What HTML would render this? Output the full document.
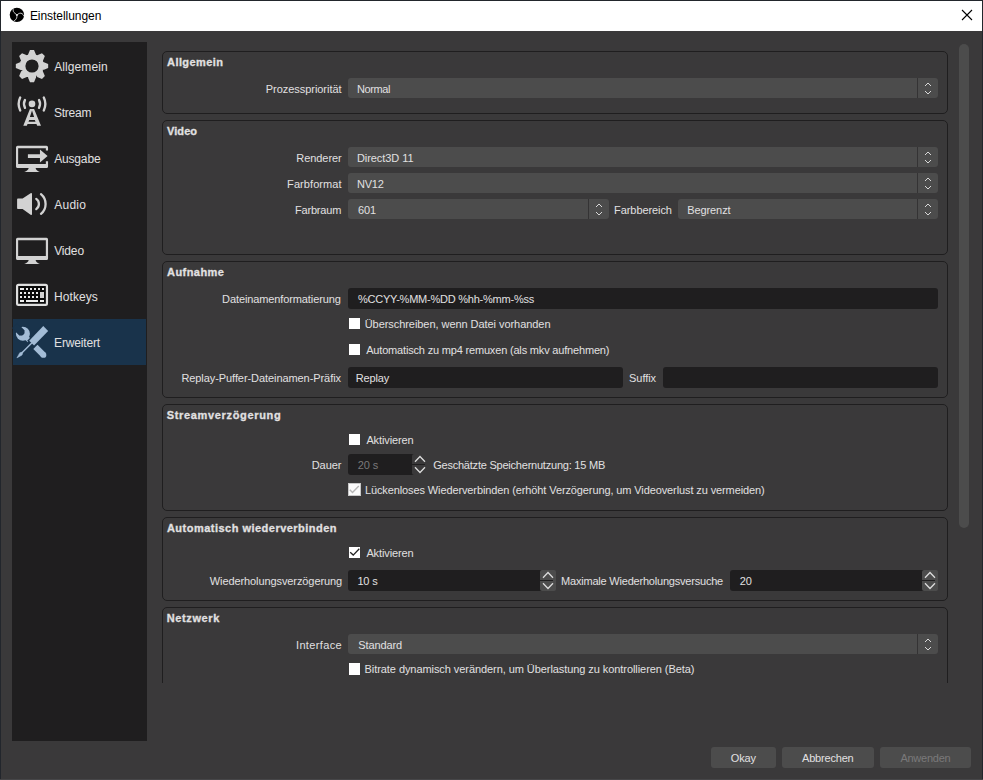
<!DOCTYPE html>
<html lang="de"><head><meta charset="utf-8"><title>Einstellungen</title>
<style>
html,body{margin:0;padding:0}
body{width:983px;height:780px;overflow:hidden;background:#22262c;position:relative;font-family:"Liberation Sans",sans-serif}
div,span,svg{position:absolute;box-sizing:border-box}
.t{white-space:pre;line-height:14px;height:14px}
.gb{border:1px solid #1f1e1f;border-radius:5px;left:162px;width:786px}
.cb{background:#4c4c4c;border-radius:3px;height:20px}
.dd{width:21px;height:20px;top:0;right:0;border-left:1px solid #343334}
.le{background:#1f1e1f;border-radius:3px}
.ck{width:11.6px;height:11.6px;background:#fff}
.btn{background:#4c4c4c;border-radius:3px;top:747px;height:21px}
.sb{background:#4c4c4c;border-radius:2px;width:16px}
</style></head><body>

<div style="left:1px;top:1px;width:981px;height:30px;background:#fff"></div>
<div style="left:1px;top:31px;width:981px;height:748px;background:#3a393a"></div>
<div style="left:0;top:779px;width:983px;height:1px;background:#464648"></div>
<svg style="left:9px;top:7px" width="16" height="16" viewBox="0 0 16 16"><circle cx="7.9" cy="7.85" r="7.2" fill="#000"/>
<g fill="none" stroke="#e4e4e4" stroke-width="0.9" stroke-linecap="round"><path d="M7.9 7.9 C6.5 6.8 4.9 5.6 4.4 4.5 C4.2 3.9 4.2 3.3 4.26 2.7"/><path d="M7.9 7.9 C8.8 7.2 9.6 6.6 10.6 6.3 C12.4 5.8 14.0 6.8 14.6 8.5"/><path d="M7.9 7.9 C8.0 9 7.9 10 7.7 10.8 C7.3 12.2 6.3 13.2 5.2 13.7"/></g><circle cx="7.9" cy="7.9" r="1" fill="#ddd"/></svg>
<svg style="left:961px;top:9px" width="12" height="12" viewBox="0 0 12 12"><path d="M1 1 L11 11 M11 1 L1 11" stroke="#000" stroke-width="1.1" fill="none"/></svg>
<div style="left:12px;top:42px;width:135px;height:699px;background:#1f1e1f"></div>
<div style="left:13px;top:319px;width:133px;height:46px;background:#19334b"></div>
<div style="left:959px;top:44px;width:10px;height:484px;border-radius:5px;background:#4c4c4c"></div>
<div class="gb" style="top:51px;height:63px"></div>
<div class="gb" style="top:120px;height:135px"></div>
<div class="gb" style="top:261px;height:137px"></div>
<div class="gb" style="top:404px;height:107px"></div>
<div class="gb" style="top:517px;height:84px"></div>
<div style="left:162px;top:607px;width:786px;height:76px;overflow:hidden"><div class="gb" style="left:0;top:0;height:120px"></div></div>
<div class="cb" style="left:348px;top:78px;width:590px"><div class="dd"></div></div>
<svg style="left:920px;top:79px" width="16" height="19" viewBox="0 0 16 19"><g fill="none" stroke="#d8d8d8" stroke-width="1"><path d="M5.0 7 L8 4 L11.0 7"/><path d="M5.0 12 L8 15 L11.0 12"/></g></svg>
<div class="cb" style="left:348px;top:147px;width:590px"><div class="dd"></div></div>
<svg style="left:920px;top:148px" width="16" height="19" viewBox="0 0 16 19"><g fill="none" stroke="#d8d8d8" stroke-width="1"><path d="M5.0 7 L8 4 L11.0 7"/><path d="M5.0 12 L8 15 L11.0 12"/></g></svg>
<div class="cb" style="left:348px;top:173px;width:590px"><div class="dd"></div></div>
<svg style="left:920px;top:174px" width="16" height="19" viewBox="0 0 16 19"><g fill="none" stroke="#d8d8d8" stroke-width="1"><path d="M5.0 7 L8 4 L11.0 7"/><path d="M5.0 12 L8 15 L11.0 12"/></g></svg>
<div class="cb" style="left:348px;top:199px;width:261px"><div class="dd"></div></div>
<svg style="left:591px;top:200px" width="16" height="19" viewBox="0 0 16 19"><g fill="none" stroke="#d8d8d8" stroke-width="1"><path d="M5.0 7 L8 4 L11.0 7"/><path d="M5.0 12 L8 15 L11.0 12"/></g></svg>
<div class="cb" style="left:678px;top:199px;width:260px"><div class="dd"></div></div>
<svg style="left:920px;top:200px" width="16" height="19" viewBox="0 0 16 19"><g fill="none" stroke="#d8d8d8" stroke-width="1"><path d="M5.0 7 L8 4 L11.0 7"/><path d="M5.0 12 L8 15 L11.0 12"/></g></svg>
<div class="cb" style="left:348px;top:634px;width:590px"><div class="dd"></div></div>
<svg style="left:920px;top:635px" width="16" height="19" viewBox="0 0 16 19"><g fill="none" stroke="#d8d8d8" stroke-width="1"><path d="M5.0 7 L8 4 L11.0 7"/><path d="M5.0 12 L8 15 L11.0 12"/></g></svg>
<div class="le" style="left:348px;top:288px;width:590px;height:21px"></div>
<div class="le" style="left:348px;top:367px;width:275px;height:21px"></div>
<div class="le" style="left:663px;top:367px;width:275px;height:21px"></div>
<div class="le" style="left:348px;top:454px;width:66px;height:21px;border-radius:3px 0 0 3px"></div>
<div class="sb" style="left:412px;top:454px;height:21px;background:#3a393a"></div>
<div style="left:412px;top:464px;width:13px;height:1px;background:#1f1e1f"></div>
<svg style="left:412px;top:454px" width="16" height="21" viewBox="0 0 16 21"><g fill="none" stroke="#dcdcdc" stroke-width="1.3"><path d="M3 7.7 L8 2.5 L13 7.7"/><path d="M3 13.3 L8 18.5 L13 13.3"/></g></svg>
<div class="le" style="left:348px;top:570px;width:194px;height:21px;border-radius:3px 0 0 3px"></div>
<div class="sb" style="left:540px;top:570px;height:21px;background:#4c4c4c"></div>
<div style="left:540px;top:580px;width:13px;height:1px;background:#1f1e1f"></div>
<svg style="left:540px;top:570px" width="16" height="21" viewBox="0 0 16 21"><g fill="none" stroke="#dcdcdc" stroke-width="1.3"><path d="M3 7.7 L8 2.5 L13 7.7"/><path d="M3 13.3 L8 18.5 L13 13.3"/></g></svg>
<div class="le" style="left:730px;top:570px;width:194px;height:21px;border-radius:3px 0 0 3px"></div>
<div class="sb" style="left:922px;top:570px;height:21px;background:#4c4c4c"></div>
<div style="left:922px;top:580px;width:13px;height:1px;background:#1f1e1f"></div>
<svg style="left:922px;top:570px" width="16" height="21" viewBox="0 0 16 21"><g fill="none" stroke="#dcdcdc" stroke-width="1.3"><path d="M3 7.7 L8 2.5 L13 7.7"/><path d="M3 13.3 L8 18.5 L13 13.3"/></g></svg>
<div class="ck" style="left:348.7px;top:317.6px"></div>
<div class="ck" style="left:348.7px;top:343.7px"></div>
<div class="ck" style="left:348.7px;top:433.6px"></div>
<div class="ck" style="left:348.7px;top:663.1px"></div>
<div class="ck" style="left:348.6px;top:546.5px"></div>
<svg style="left:348px;top:546px" width="13" height="13" viewBox="0 0 13 13"><path d="M2.2 6.3 L5.2 9.1 L11.3 2.7" fill="none" stroke="#222" stroke-width="1.3"/></svg>
<div style="left:348px;top:483px;width:13px;height:13px;background:#fbfbfb;border:1px solid #c8c8c8"></div>
<svg style="left:348px;top:483px" width="13" height="13" viewBox="0 0 13 13"><path d="M1.8 6.7 L4.5 9.4 L10.8 3" fill="none" stroke="#b6b6b6" stroke-width="1.4"/></svg>
<div class="btn" style="left:711px;width:65px"></div>
<div class="btn" style="left:782px;width:92px"></div>
<div class="btn" style="left:880px;width:91px"></div>
<svg style="left:0;top:0" width="150" height="370" viewBox="0 0 150 370">
<g fill="#d2d2d2">
<!-- gear -->
<path transform="translate(15.88 49.88) scale(4.03)" d="M3.5 0l-.5 1.190c-.1.030-.19.080-.28.130l-1.190-.5-.72.720.5 1.190c-.5.100-.1.180-.13.280l-1.190.5v1l1.190.5c.4.100.8.180.13.280l-.5 1.190.72.720 1.190-.5c.9.040.18.090.28.130l.5 1.190h1l.5-1.190c.09-.4.190-.8.280-.130l1.190.5.720-.720-.5-1.190c.040-.9.090-.190.130-.280l1.190-.5v-1l-1.190-.5c-.030-.09-.080-.190-.130-.280l.5-1.190-.720-.720-1.190.5c-.09-.040-.190-.090-.280-.130l-.5-1.190h-1zm.5 2.500c.830 0 1.500.670 1.500 1.500s-.670 1.500-1.500 1.500-1.500-.670-1.500-1.500.670-1.500 1.500-1.500z"/>
<circle cx="32" cy="66" r="6.6" fill="#1f1e1f"/>
<!-- stream -->
<circle cx="32" cy="103.9" r="3.3"/>
<path fill-rule="evenodd" d="M29.9 109 L34.1 109 L41 125.8 L37.2 125.8 L36.45 124 L27.55 124 L26.8 125.8 L23.3 125.8 Z M32 110.6 L29.9 117.1 L34.1 117.1 Z M29.2 120 L34.8 120 L35.5 121.7 L28.5 121.7 Z"/>
<!-- output stand + video stand -->
<path d="M28.7 168 L35.6 168 Q36 170.6 39.9 171.9 L24.2 171.9 Q28.2 170.6 28.7 168 Z"/>
<path d="M28.7 260 L35.6 260 Q36 262.6 39.9 263.9 L24.2 263.9 Q28.2 262.6 28.7 260 Z"/>
<!-- output monitor with gap -->
<path fill-rule="evenodd" d="M17.6 145.8 H46.4 A1.6 1.6 0 0 1 48.05 147.4 V150.6 H45.85 V148.15 H18.15 V163.9 H45.85 V161.3 H48.05 V166.4 A1.6 1.6 0 0 1 46.4 168 H17.6 A1.6 1.6 0 0 1 16 166.4 V147.4 A1.6 1.6 0 0 1 17.6 145.8 Z"/>
<path d="M27.9 154.15 H39.95 V149.5 L47.6 156.05 L39.95 162.6 V158 H27.9 Z"/>
<!-- video monitor -->
<path fill-rule="evenodd" d="M17.6 237.8 H46.4 A1.6 1.6 0 0 1 48.05 239.4 V258.4 A1.6 1.6 0 0 1 46.4 260 H17.6 A1.6 1.6 0 0 1 16 258.4 V239.4 A1.6 1.6 0 0 1 17.6 237.8 Z M18.15 240.15 V255.9 H45.85 V240.15 Z"/>
<!-- audio -->
<path d="M17.9 198.6 H22.6 L30.6 193.2 Q32 192.6 32 194 V214 Q32 215.4 30.6 214.8 L22.6 209.1 H17.9 Q17.1 209.1 17.1 208.3 V199.4 Q17.1 198.6 17.9 198.6 Z"/>
</g>
<g fill="none" stroke="#d2d2d2" stroke-linecap="round">
<path stroke-width="2.3" d="M25.0 99.9 A8.6 8.6 0 0 0 25.0 107.9"/>
<path stroke-width="2.3" d="M39.0 99.9 A8.6 8.6 0 0 1 39.0 107.9"/>
<path stroke-width="2.4" d="M20.2 97.6 A14.7 14.7 0 0 0 20.2 110.4"/>
<path stroke-width="2.4" d="M43.8 97.6 A14.7 14.7 0 0 1 43.8 110.4"/>
</g>
<g fill="none" stroke="#d2d2d2" stroke-linecap="round">
<path stroke-width="2.3" d="M36.26 198.92 A6.2 6.2 0 0 1 36.26 209.08"/>
<path stroke-width="2.3" d="M40.99 194.12 A12.9 12.9 0 0 1 40.99 213.88"/>
</g>
<!-- keyboard -->
<rect x="17.1" y="284.9" width="29.85" height="20" rx="1.4" fill="#0b0b0b" stroke="#dedede" stroke-width="2.2"/>
<g fill="#ececec">
<rect x="20" y="288" width="4" height="2"/><rect x="26" y="288" width="2" height="2"/><rect x="30" y="288" width="2" height="2"/><rect x="34" y="288" width="2" height="2"/><rect x="38" y="288" width="2" height="2"/><rect x="42" y="288" width="2" height="2"/>
<rect x="20" y="292" width="2" height="2"/><rect x="24" y="292" width="2" height="2"/><rect x="28" y="292" width="2" height="2"/><rect x="32" y="292" width="2" height="2"/><rect x="36" y="292" width="2" height="2"/>
<rect x="20" y="296" width="2" height="2"/><rect x="24" y="296" width="2" height="2"/><rect x="28" y="296" width="2" height="2"/><rect x="32" y="296" width="2" height="2"/><rect x="36" y="296" width="2" height="2"/>
<rect x="40" y="292" width="4" height="6" fill="#d2d2d2"/>
<rect x="20" y="300" width="4" height="2"/><rect x="26" y="300" width="12" height="2"/><rect x="40" y="300" width="4" height="2"/>
</g>
<!-- advanced: wrench + screwdriver -->
<g>
<circle cx="22.9" cy="333.8" r="7" fill="#a3bcd6"/>
<path d="M24.2 335.2 L24.2 330.3 L17.13 323.2 L12.2 328.1 L19.3 335.2 Z" fill="#19334b" stroke="#19334b" stroke-width="0.6" stroke-linejoin="round"/>
<path d="M23.4 334.6 L29.4 340.6" stroke="#a3bcd6" stroke-width="4.8" fill="none"/>
<path d="M47.3 327.0 L30.6 344.15" stroke="#19334b" stroke-width="9.6" fill="none"/>
<path d="M31.6 343.15 L26 348.75" stroke="#19334b" stroke-width="4.1" fill="none"/>
<path d="M35.4 346.9 L43.4 354.9" stroke="#a3bcd6" stroke-width="5.9" fill="none"/>
<circle cx="43.4" cy="354.9" r="2.95" fill="#a3bcd6"/>
<path d="M43.3 326.1 L48.15 331 L34.05 345.6 L29.2 340.7 Z" fill="#a3bcd6"/>
<path d="M32 342.8 L21 353.8" stroke="#a3bcd6" stroke-width="1.5" fill="none"/>
<path d="M22.7 352.1 L19.8 352.7 L16.9 357.9 L22.1 355.0 Z" fill="#a3bcd6" stroke="#a3bcd6" stroke-width="0.5" stroke-linejoin="round"/>
</g>
</svg>

<span class="t" style="left:29.9px;top:9px;font-size:12px;color:#000000;letter-spacing:-0.05px">Einstellungen</span>
<span class="t" style="left:54.2px;top:60px;font-size:12px;color:#e1e0e1;letter-spacing:0.1px">Allgemein</span>
<span class="t" style="left:53.9px;top:106px;font-size:12px;color:#e1e0e1;letter-spacing:-0.2px">Stream</span>
<span class="t" style="left:54.2px;top:152px;font-size:12px;color:#e1e0e1;letter-spacing:-0.167px">Ausgabe</span>
<span class="t" style="left:54.2px;top:198px;font-size:12px;color:#e1e0e1;letter-spacing:0.275px">Audio</span>
<span class="t" style="left:54.2px;top:244px;font-size:12px;color:#e1e0e1;letter-spacing:-0.15px">Video</span>
<span class="t" style="left:54.1px;top:290px;font-size:12px;color:#e1e0e1;letter-spacing:0.051px">Hotkeys</span>
<span class="t" style="left:54.1px;top:336px;font-size:12px;color:#e1e0e1;letter-spacing:-0.164px">Erweitert</span>
<span class="t" style="left:167.1px;top:55px;font-size:11px;color:#e1e0e1;font-weight:700;-webkit-text-stroke:0.3px #e1e0e1;letter-spacing:0.4px">Allgemein</span>
<span class="t" style="left:167px;top:124px;font-size:11px;color:#e1e0e1;font-weight:700;-webkit-text-stroke:0.3px #e1e0e1;letter-spacing:0.075px">Video</span>
<span class="t" style="left:167px;top:265px;font-size:11px;color:#e1e0e1;font-weight:700;-webkit-text-stroke:0.3px #e1e0e1;letter-spacing:0.457px">Aufnahme</span>
<span class="t" style="left:166.8px;top:408px;font-size:11px;color:#e1e0e1;font-weight:700;-webkit-text-stroke:0.3px #e1e0e1;letter-spacing:0.656px">Streamverzögerung</span>
<span class="t" style="left:166.9px;top:521px;font-size:11px;color:#e1e0e1;font-weight:700;-webkit-text-stroke:0.3px #e1e0e1;letter-spacing:0.485px">Automatisch wiederverbinden</span>
<span class="t" style="left:166.7px;top:611px;font-size:11px;color:#e1e0e1;font-weight:700;-webkit-text-stroke:0.3px #e1e0e1;letter-spacing:0.628px">Netzwerk</span>
<span class="t" style="left:265.8px;top:82px;font-size:11px;color:#e1e0e1;letter-spacing:-0.046px">Prozesspriorität</span>
<span class="t" style="left:296.3px;top:151px;font-size:11px;color:#e1e0e1;letter-spacing:-0.056px">Renderer</span>
<span class="t" style="left:287.1px;top:177px;font-size:11px;color:#e1e0e1;letter-spacing:0.078px">Farbformat</span>
<span class="t" style="left:294.9px;top:203px;font-size:11px;color:#e1e0e1;letter-spacing:-0.171px">Farbraum</span>
<span class="t" style="left:614.1px;top:203px;font-size:11px;color:#e1e0e1;letter-spacing:-0.08px">Farbbereich</span>
<span class="t" style="left:222.1px;top:292px;font-size:11px;color:#e1e0e1;letter-spacing:-0.11px">Dateinamenformatierung</span>
<span class="t" style="left:181.4px;top:371px;font-size:11px;color:#e1e0e1;letter-spacing:-0.073px">Replay-Puffer-Dateinamen-Präfix</span>
<span class="t" style="left:629.1px;top:371px;font-size:11px;color:#e1e0e1;letter-spacing:-0.08px">Suffix</span>
<span class="t" style="left:311.7px;top:458px;font-size:11px;color:#e1e0e1;letter-spacing:-0.05px">Dauer</span>
<span class="t" style="left:433.2px;top:458px;font-size:11px;color:#e1e0e1;letter-spacing:-0.222px">Geschätzte Speichernutzung: 15 MB</span>
<span class="t" style="left:209.8px;top:574px;font-size:11px;color:#e1e0e1;letter-spacing:-0.095px">Wiederholungsverzögerung</span>
<span class="t" style="left:561.1px;top:574px;font-size:11px;color:#e1e0e1;letter-spacing:-0.207px">Maximale Wiederholungsversuche</span>
<span class="t" style="left:296.0px;top:638px;font-size:11px;color:#e1e0e1;letter-spacing:0.35px">Interface</span>
<span class="t" style="left:356.9px;top:82px;font-size:11px;color:#e1e0e1;letter-spacing:-0.36px">Normal</span>
<span class="t" style="left:356.9px;top:151px;font-size:11px;color:#e1e0e1;letter-spacing:-0.06px">Direct3D 11</span>
<span class="t" style="left:356.9px;top:177px;font-size:11px;color:#e1e0e1;letter-spacing:-0.15px">NV12</span>
<span class="t" style="left:358.1px;top:203px;font-size:11px;color:#e1e0e1;letter-spacing:-0.15px">601</span>
<span class="t" style="left:687.2px;top:203px;font-size:11px;color:#e1e0e1;letter-spacing:-0.087px">Begrenzt</span>
<span class="t" style="left:358.0px;top:292px;font-size:11px;color:#e1e0e1;letter-spacing:-0.229px">%CCYY-%MM-%DD %hh-%mm-%ss</span>
<span class="t" style="left:355.8px;top:371px;font-size:11px;color:#e1e0e1;letter-spacing:-0.16px">Replay</span>
<span class="t" style="left:357.8px;top:458px;font-size:11px;color:#7a797a;letter-spacing:-0.15px">20 s</span>
<span class="t" style="left:357.4px;top:574px;font-size:11px;color:#e1e0e1;letter-spacing:-0.15px">10 s</span>
<span class="t" style="left:739.8px;top:574px;font-size:11px;color:#e1e0e1;letter-spacing:-0.15px">20</span>
<span class="t" style="left:358.3px;top:638px;font-size:11px;color:#e1e0e1;letter-spacing:-0.115px">Standard</span>
<span class="t" style="left:364.7px;top:317px;font-size:11px;color:#e1e0e1;letter-spacing:-0.056px">Überschreiben, wenn Datei vorhanden</span>
<span class="t" style="left:366.2px;top:343px;font-size:11px;color:#e1e0e1;letter-spacing:-0.178px">Automatisch zu mp4 remuxen (als mkv aufnehmen)</span>
<span class="t" style="left:366.4px;top:433px;font-size:11px;color:#e1e0e1;letter-spacing:-0.111px">Aktivieren</span>
<span class="t" style="left:364.9px;top:483px;font-size:11px;color:#e1e0e1;letter-spacing:-0.11px">Lückenloses Wiederverbinden (erhöht Verzögerung, um Videoverlust zu vermeiden)</span>
<span class="t" style="left:366.4px;top:546px;font-size:11px;color:#e1e0e1;letter-spacing:-0.111px">Aktivieren</span>
<span class="t" style="left:364.6px;top:662px;font-size:11px;color:#e1e0e1;letter-spacing:-0.07px">Bitrate dynamisch verändern, um Überlastung zu kontrollieren (Beta)</span>
<span class="t" style="left:730.8px;top:751px;font-size:11px;color:#e1e0e1;letter-spacing:-0.15px">Okay</span>
<span class="t" style="left:802.0px;top:751px;font-size:11px;color:#e1e0e1;letter-spacing:-0.188px">Abbrechen</span>
<span class="t" style="left:900.4px;top:751px;font-size:11px;color:#7a797a;letter-spacing:-0.243px">Anwenden</span>
</body></html>
